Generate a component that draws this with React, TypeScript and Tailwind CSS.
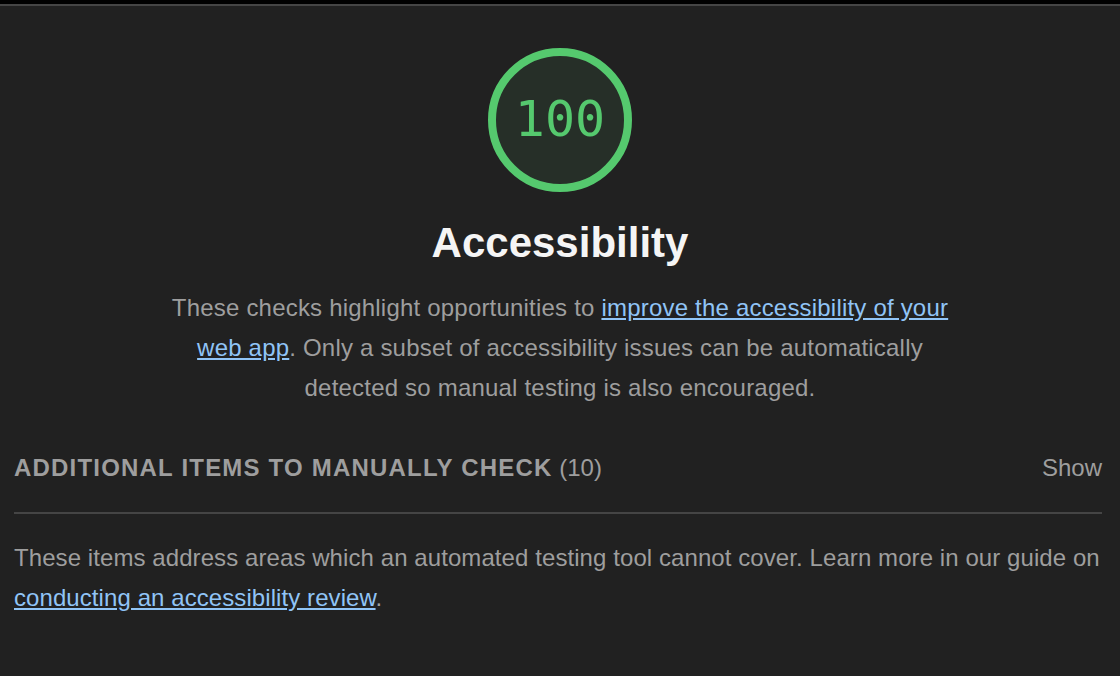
import React from "react";

export default function App() {
  return (
    <div
      className="w-[1120px] h-[676px] bg-[#212121] overflow-hidden"
      style={{ fontFamily: '"Liberation Sans", Arial, sans-serif' }}
    >
      <div className="h-[4px] bg-black" />
      <div className="h-[2px] bg-[#454545]" />
      <div className="flex flex-col items-center pt-[42px]">
        <div className="relative w-[144px] h-[144px]">
          <svg width="144" height="144" viewBox="0 0 144 144">
            <circle cx="72" cy="72" r="68" fill="#262f28" stroke="#55c96e" strokeWidth="8" />
          </svg>
          <div
            className="absolute inset-0 flex items-center justify-center text-[#55c96e] text-[50px] leading-none pb-[2px]"
            style={{ fontFamily: '"DejaVu Sans Mono", "Liberation Mono", monospace' }}
          >
            100
          </div>
        </div>
        <h1 className="mt-[26px] text-[42px] leading-[50px] font-bold text-[#f5f5f5]">Accessibility</h1>
        <p className="mt-[20px] w-[800px] text-center text-[24px] leading-[40px] tracking-[0.2px] text-[#9e9e9e]">
          These checks highlight opportunities to{" "}
          <a className="text-[#90c4f6] underline">improve the accessibility of your web app</a>. Only a
          subset of accessibility issues can be automatically detected so manual testing is also
          encouraged.
        </p>
      </div>
      <div className="pl-[14px] pr-[18px] mt-[40px]">
        <div className="flex items-center justify-between h-[40px] text-[24px] text-[#9e9e9e]">
          <div>
            <span className="font-bold uppercase tracking-[0.05em]">Additional items to manually check</span>{" "}
            <span>(10)</span>
          </div>
          <span>Show</span>
        </div>
        <div className="mt-[24px] h-[2px] bg-[#454545]" />
        <p className="mt-[24px] text-[24px] leading-[40px] tracking-[0.08px] text-[#9e9e9e]">
          These items address areas which an automated testing tool cannot cover. Learn more in our
          guide on <a className="text-[#90c4f6] underline">conducting an accessibility review</a>.
        </p>
      </div>
    </div>
  );
}
